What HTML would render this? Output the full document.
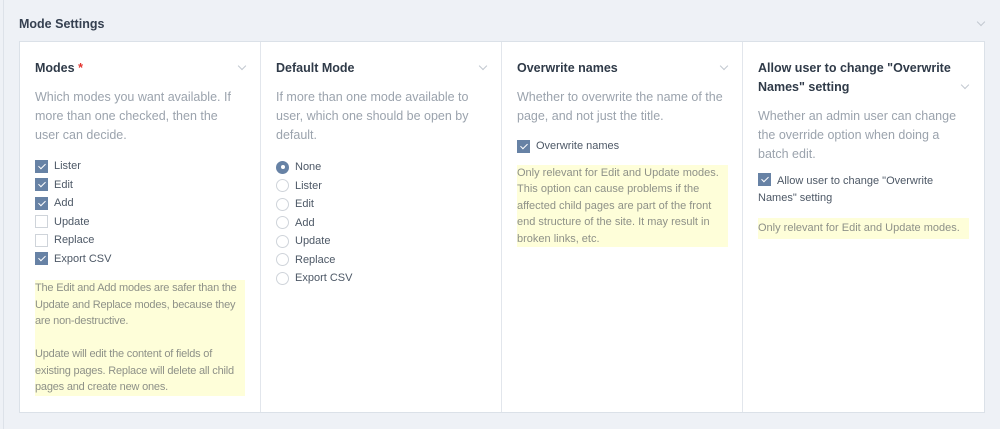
<!DOCTYPE html>
<html><head><style>
*{box-sizing:border-box;margin:0;padding:0}
body{width:1000px;height:429px;background:#eef1f6;font-family:"Liberation Sans",sans-serif;position:relative;overflow:hidden}
.edge{position:absolute;left:3px;top:0;bottom:0;border-left:1px solid #dde2e9}
.title{position:absolute;left:19px;top:17px;font-weight:bold;font-size:12.5px;color:#354050}
.chev{position:absolute;width:6px;height:6px;border-right:1px solid #c2c8d0;border-bottom:1px solid #c2c8d0;transform:rotate(45deg)}
.box{position:absolute;left:19px;top:41px;width:966px;height:372px;background:#fff;border:1px solid #dbe1e8;display:flex}
.col{width:241px;border-right:1px solid #e2e6ec;position:relative;padding:15px 15px 0 15px}
.col:last-child{border-right:none}
h3{font-size:12.5px;font-weight:bold;color:#2f3a48;line-height:19px;margin-top:2px;width:195px}
h3 .r{color:#e3342f}
.desc{font-size:12.5px;color:#9ba3ad;line-height:19px;margin-top:10px}
.items{margin-top:12px}
.it{font-size:11px;color:#4d5866;height:18.5px;display:flex;align-items:center}
.cb{width:13px;height:13px;margin-right:6px;border:1px solid #cfd4da;background:#fff;position:relative}
.cb.on{background:#6782a5;border-color:#6782a5}
.cb.on:after{content:"";position:absolute;left:3.5px;top:1px;width:3px;height:6px;border-right:1.5px solid #fff;border-bottom:1.5px solid #fff;transform:rotate(45deg)}
.rd{width:13px;height:13px;border-radius:50%;border:1px solid #cfd4da;margin-right:6px;position:relative}
.rd.on{background:#6782a5;border-color:#6782a5}
.rd.on:after{content:"";position:absolute;left:3.5px;top:3.5px;width:4px;height:4px;border-radius:50%;background:#fff}
.note{background:#fefed9;font-size:11px;color:#8e9188;line-height:16.5px;padding:0 2px 0 0;white-space:nowrap}
</style></head><body>
<div class="edge"></div>
<div class="title">Mode Settings</div>
<div class="chev" style="left:978px;top:19px"></div>
<div class="box">
 <div class="col">
  <div class="chev" style="left:219px;top:21px"></div>
  <h3>Modes <span class="r">*</span></h3>
  <div class="desc">Which modes you want available. If more than one checked, then the user can decide.</div>
  <div class="items">
   <div class="it"><span class="cb on"></span>Lister</div>
   <div class="it"><span class="cb on"></span>Edit</div>
   <div class="it"><span class="cb on"></span>Add</div>
   <div class="it"><span class="cb"></span>Update</div>
   <div class="it"><span class="cb"></span>Replace</div>
   <div class="it"><span class="cb on"></span>Export CSV</div>
  </div>
  <div class="note" style="margin-top:12px;letter-spacing:-0.2px">The Edit and Add modes are safer than the<br>Update and Replace modes, because they<br>are non-destructive.<br><br>Update will edit the content of fields of<br>existing pages. Replace will delete all child<br>pages and create new ones.</div>
 </div>
 <div class="col">
  <div class="chev" style="left:219px;top:21px"></div>
  <h3>Default Mode</h3>
  <div class="desc">If more than one mode available to user, which one should be open by default.</div>
  <div class="items" style="margin-top:13px">
   <div class="it"><span class="rd on"></span>None</div>
   <div class="it"><span class="rd"></span>Lister</div>
   <div class="it"><span class="rd"></span>Edit</div>
   <div class="it"><span class="rd"></span>Add</div>
   <div class="it"><span class="rd"></span>Update</div>
   <div class="it"><span class="rd"></span>Replace</div>
   <div class="it"><span class="rd"></span>Export CSV</div>
  </div>
 </div>
 <div class="col">
  <div class="chev" style="left:219px;top:21px"></div>
  <h3>Overwrite names</h3>
  <div class="desc">Whether to overwrite the name of the page, and not just the title.</div>
  <div class="items" style="margin-top:11px">
   <div class="it"><span class="cb on"></span>Overwrite names</div>
  </div>
  <div class="note" style="margin-top:9px;width:211px">Only relevant for Edit and Update modes.<br>This option can cause problems if the<br>affected child pages are part of the front<br>end structure of the site. It may result in<br>broken links, etc.</div>
 </div>
 <div class="col">
  <div class="chev" style="left:219px;top:40px"></div>
  <h3>Allow user to change "Overwrite Names" setting</h3>
  <div class="desc">Whether an admin user can change the override option when doing a batch edit.</div>
  <div style="margin-top:9px;font-size:11px;color:#4d5866;line-height:16.5px"><span class="cb on" style="display:inline-block;vertical-align:-2px;margin-right:6px"></span>Allow user to change "Overwrite Names" setting</div>
  <div class="note" style="margin-top:12px;width:211px;padding:2px 0">Only relevant for Edit and Update modes.</div>
 </div>
</div>
</body></html>
